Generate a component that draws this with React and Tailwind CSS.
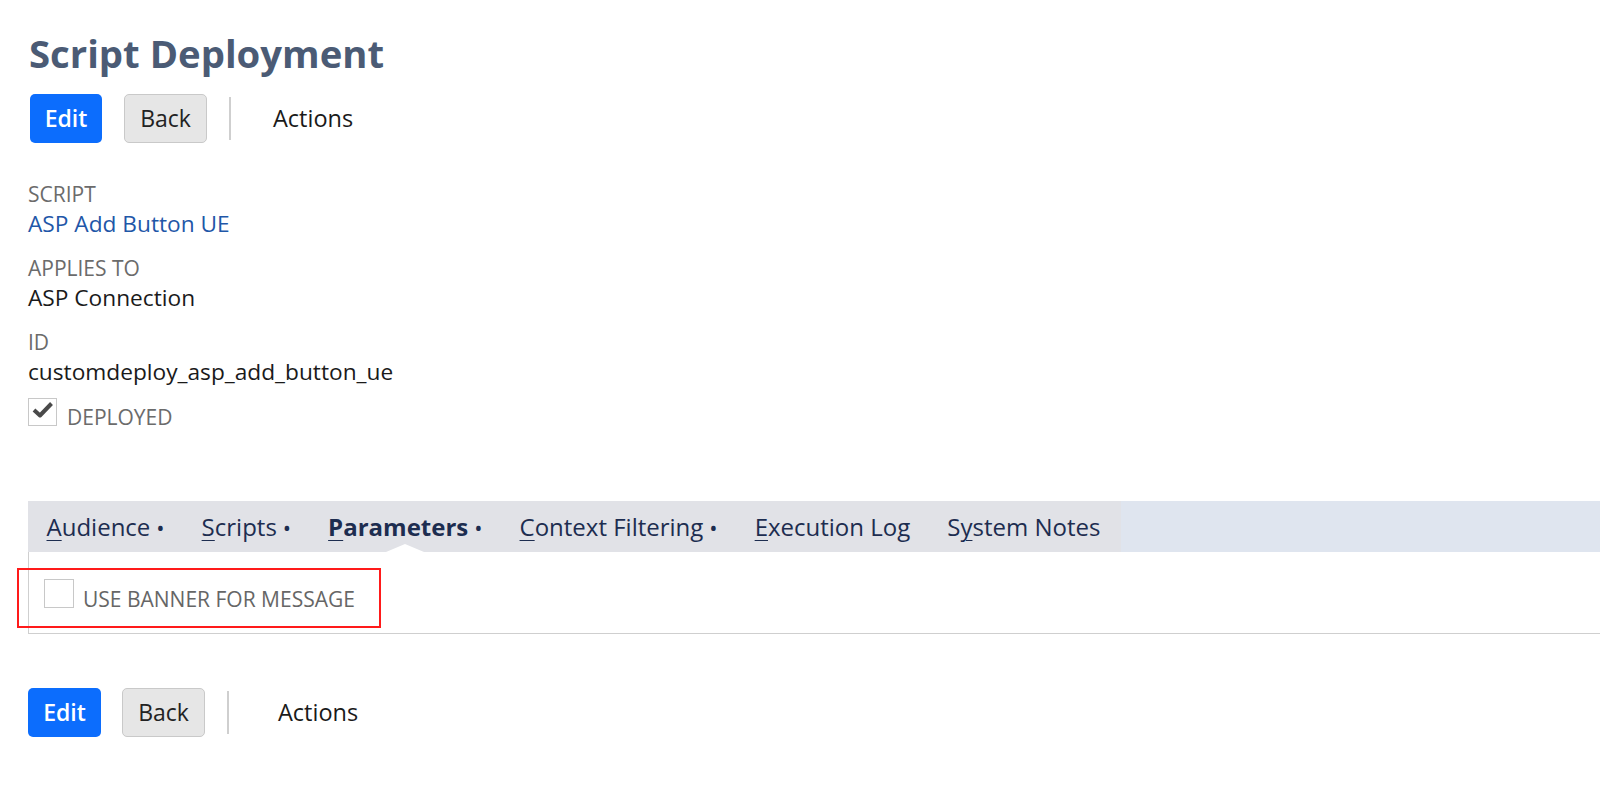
import React from 'react'

const tabs = [
  { pre: '', key: 'A', rest: 'udience', dot: true },
  { pre: '', key: 'S', rest: 'cripts', dot: true },
  { pre: '', key: 'P', rest: 'arameters', dot: true, active: true },
  { pre: '', key: 'C', rest: 'ontext Filtering', dot: true },
  { pre: '', key: 'E', rest: 'xecution Log' },
  { pre: 'S', key: 'y', rest: 'stem Notes' },
]

function ButtonBar({ edit, back, sep, actions }) {
  return (
    <div className="flex items-center h-[49px]">
      <button className={`h-full ${edit} rounded-[5px] bg-[#0c6dfd] text-white text-[23px] font-semibold`}>
        Edit
      </button>
      <button className={`h-full ${back} rounded-[5px] border border-[#c9c9c9] bg-[#e6e6e6] text-[#222] text-[23px]`}>
        Back
      </button>
      <div className={`${sep} w-[2px] h-[43px] bg-[#cfcfcf]`} />
      <span className={`${actions} text-[23.5px] font-medium text-[#1a1a1a]`}>Actions</span>
    </div>
  )
}

function Field({ label, children, valueClass = 'text-[#1a1a1a]', last }) {
  return (
    <div className={last ? '' : 'mb-[14px]'}>
      <div className="text-[21px] leading-[30px] text-[#6b6b6b]">{label}</div>
      <div className={`text-[22.7px] leading-[30px] ${valueClass}`}>{children}</div>
    </div>
  )
}

export default function App() {
  return (
    <div className="min-h-screen bg-white font-['Open_Sans',sans-serif] overflow-hidden">
      <div className="pl-[29px] pt-[34px]">
        <h1 className="text-[38.3px] leading-[38px] font-bold text-[#4b5b75]">Script Deployment</h1>
      </div>

      <div className="pl-[30px] mt-[22px]">
        <ButtonBar edit="w-[72px]" back="ml-[22px] w-[83px]" sep="ml-[22px]" actions="ml-[42px]" />
      </div>

      <div className="pl-[28px] mt-[36px]">
        <Field label="SCRIPT" valueClass="text-[#1f57a8]">ASP Add Button UE</Field>
        <Field label="APPLIES TO">ASP Connection</Field>
        <Field label="ID" last>customdeploy_asp_add_button_ue</Field>
        <div className="flex items-end mt-[11px]">
          <div className="w-[29px] h-[28px] border border-[#c8c8c8] bg-white flex items-start justify-center">
            <svg width="22" height="18" viewBox="0 0 22 18" className="mt-[2px]">
              <path d="M2 9 L8 14.5 L19.5 2.5" fill="none" stroke="#4a4a4a" strokeWidth="4" strokeLinejoin="round" />
            </svg>
          </div>
          <span className="ml-[10px] text-[21px] leading-[22px] text-[#6b6b6b] translate-y-[2px]">DEPLOYED</span>
        </div>
      </div>

      <div className="ml-[28px] mt-[75px]">
        <div className="flex h-[51px] bg-[#dfe5ef]">
          <div className="flex bg-[#e1e2e7] pr-[2px]">
            {tabs.map((t, i) => (
              <div
                key={i}
                className={`relative px-[18.5px] text-[24px] leading-[51px] text-[#1d2d50] whitespace-nowrap ${t.active ? 'font-bold' : ''}`}
              >
                {t.pre}
                <span className="underline decoration-1 underline-offset-[4px]">{t.key}</span>
                {t.rest}
                {t.dot && <span className="font-normal text-[22px] ml-[6px]">•</span>}
                {t.active && (
                  <div className="absolute bottom-0 left-1/2 -translate-x-1/2 w-0 h-0 border-l-[19px] border-r-[19px] border-b-[8px] border-l-transparent border-r-transparent border-b-white" />
                )}
              </div>
            ))}
          </div>
        </div>

        <div className="relative h-[82px] border-l border-b border-[#cfcfcf] bg-white">
          <div className="flex items-center pl-[15px] pt-[27px]">
            <div className="w-[30px] h-[29px] border border-[#c8c8c8] bg-white" />
            <span className="ml-[9px] text-[21px] leading-[29px] text-[#666] translate-y-[6px]">USE BANNER FOR MESSAGE</span>
          </div>
          <div className="absolute left-[-12px] top-[16px] w-[364px] h-[60px] border-2 border-[#ff1a1a]" />
        </div>
      </div>

      <div className="pl-[28px] mt-[54px]">
        <ButtonBar edit="w-[73px]" back="ml-[21px] w-[83px]" sep="ml-[22px]" actions="ml-[49px]" />
      </div>
    </div>
  )
}
